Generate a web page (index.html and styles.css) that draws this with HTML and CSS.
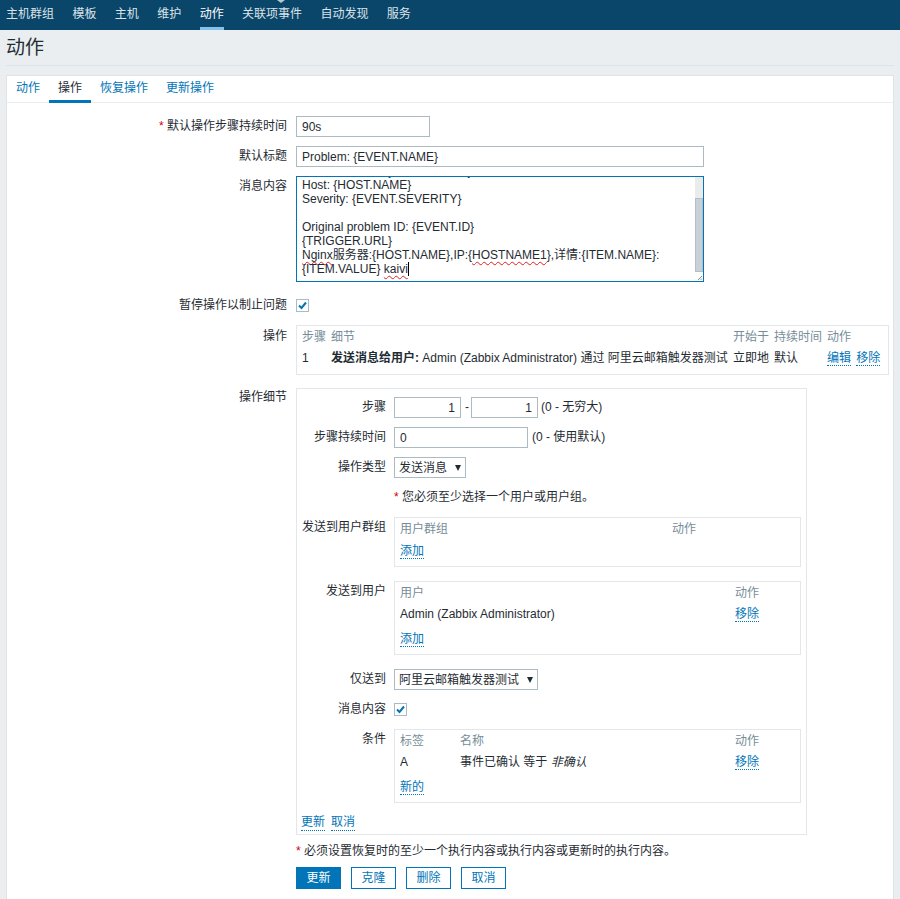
FILE: index.html
```html
<!DOCTYPE html>
<html lang="zh-CN">
<head>
<meta charset="utf-8">
<title>动作</title>
<link rel="stylesheet" href="styles.css">
</head>
<body>
<nav class="topnav">
  <span class="nav-item">主机群组</span>
  <span class="nav-item">模板</span>
  <span class="nav-item">主机</span>
  <span class="nav-item">维护</span>
  <span class="nav-item active">动作</span>
  <span class="nav-item">关联项事件</span>
  <span class="nav-item">自动发现</span>
  <span class="nav-item">服务</span>
  <span class="notch"></span>
</nav>
<main class="page">
  <header class="page-header"><h1 class="page-title">动作</h1></header>
  <section class="card">
    <ul class="tabs">
      <li class="tab">动作</li>
      <li class="tab active">操作</li>
      <li class="tab">恢复操作</li>
      <li class="tab">更新操作</li>
    </ul>
    <div class="form">
      <div class="row">
        <div class="lbl"><span class="req">*</span> 默认操作步骤持续时间</div>
        <div class="ctl"><input class="input w134" type="text" value="90s"></div>
      </div>
      <div class="row">
        <div class="lbl">默认标题</div>
        <div class="ctl"><input class="input w408" type="text" value="Problem: {EVENT.NAME}"></div>
      </div>
      <div class="row">
        <div class="lbl">消息内容</div>
        <div class="ctl">
          <div class="textarea">
            <div class="ta-view">
              <div class="ta-text">
                <div class="ta-line">Problem started at {EVENT.TIME} on {EVENT.DATE}</div>
                <div class="ta-line">Problem name: {EVENT.NAME}</div>
                <div class="ta-line">Host: {HOST.NAME}</div>
                <div class="ta-line">Severity: {EVENT.SEVERITY}</div>
                <div class="ta-line">&nbsp;</div>
                <div class="ta-line">Original problem ID: {EVENT.ID}</div>
                <div class="ta-line">{TRIGGER.URL}</div>
                <div class="ta-line"><span class="spell">Nginx</span>服务器:{HOST.NAME},IP:{<span class="spell">HOSTNAME1</span>},详情:{ITEM.NAME}:</div>
                <div class="ta-line">{ITEM.VALUE} <span class="spell">kaivi</span><span class="caret"></span></div>
              </div>
            </div>
            <div class="scrollbar">
              <div class="sb-track"></div>
              <div class="sb-thumb"></div>
              <div class="sb-corner">
                <svg width="8" height="8" viewBox="0 0 8 8"><path d="M7 3 L3 7 M7 5.5 L5.5 7" stroke="#8a8a8a" stroke-width="1" fill="none"/></svg>
              </div>
            </div>
          </div>
        </div>
      </div>
      <div class="row row-cb">
        <div class="lbl">暂停操作以制止问题</div>
        <div class="ctl"><span class="cb"><svg width="11" height="11" viewBox="0 0 11 11"><path d="M2 5.5 L4.5 8 L9 2.5" stroke="#0275b8" stroke-width="2" fill="none"/></svg></span></div>
      </div>
      <div class="row row-box">
        <div class="lbl lbl-box">操作</div>
        <div class="ctl">
          <div class="tbox tbox-ops">
            <div class="grid ops-grid th">
              <span>步骤</span><span>细节</span><span>开始于</span><span>持续时间</span><span>动作</span>
            </div>
            <div class="grid ops-grid tr">
              <span>1</span>
              <span class="nowrap"><b>发送消息给用户:</b> Admin (Zabbix Administrator) 通过 阿里云邮箱触发器测试</span>
              <span>立即地</span>
              <span>默认</span>
              <span class="nowrap"><a class="link">编辑</a> <a class="link">移除</a></span>
            </div>
          </div>
        </div>
      </div>
      <div class="row row-details">
        <div class="lbl lbl-details">操作细节</div>
        <div class="ctl">
          <div class="dbox">
            <div class="drow">
              <div class="dlbl">步骤</div>
              <div class="ctl">
                <input class="input w67 num" type="text" value="1"><span class="dash">-</span><input class="input w67 num" type="text" value="1"><span class="hint">(0 - 无穷大)</span>
              </div>
            </div>
            <div class="drow">
              <div class="dlbl">步骤持续时间</div>
              <div class="ctl"><input class="input w134" type="text" value="0"><span class="hint hint2">(0 - 使用默认)</span></div>
            </div>
            <div class="drow">
              <div class="dlbl">操作类型</div>
              <div class="ctl"><span class="sel">发送消息<span class="arrow"></span></span></div>
            </div>
            <div class="drow">
              <div class="dlbl"></div>
              <div class="ctl warn"><span class="req">*</span>&nbsp;您必须至少选择一个用户或用户组。</div>
            </div>
            <div class="drow drow-box">
              <div class="dlbl dlbl-box">发送到用户群组</div>
              <div class="ctl">
                <div class="tbox">
                  <div class="grid ug-grid th"><span>用户群组</span><span>动作</span></div>
                  <div class="grid tf"><span><a class="link">添加</a></span></div>
                </div>
              </div>
            </div>
            <div class="drow drow-box">
              <div class="dlbl dlbl-box">发送到用户</div>
              <div class="ctl">
                <div class="tbox">
                  <div class="grid u-grid th"><span>用户</span><span>动作</span></div>
                  <div class="grid u-grid tr"><span>Admin (Zabbix Administrator)</span><span><a class="link">移除</a></span></div>
                  <div class="grid tf"><span><a class="link">添加</a></span></div>
                </div>
              </div>
            </div>
            <div class="drow">
              <div class="dlbl">仅送到</div>
              <div class="ctl"><span class="sel">阿里云邮箱触发器测试<span class="arrow"></span></span></div>
            </div>
            <div class="drow">
              <div class="dlbl">消息内容</div>
              <div class="ctl"><span class="cb"><svg width="11" height="11" viewBox="0 0 11 11"><path d="M2 5.5 L4.5 8 L9 2.5" stroke="#0275b8" stroke-width="2" fill="none"/></svg></span></div>
            </div>
            <div class="drow drow-cond">
              <div class="dlbl dlbl-box">条件</div>
              <div class="ctl">
                <div class="tbox">
                  <div class="grid c-grid th"><span>标签</span><span>名称</span><span>动作</span></div>
                  <div class="grid c-grid tr"><span>A</span><span>事件已确认 等于 <em>非确认</em></span><span><a class="link">移除</a></span></div>
                  <div class="grid tf"><span><a class="link">新的</a></span></div>
                </div>
              </div>
            </div>
            <div class="dlinks"><a class="link">更新</a><a class="link">取消</a></div>
          </div>
        </div>
      </div>
      <div class="row row-note">
        <div class="lbl"></div>
        <div class="ctl note"><span class="req">*</span>&nbsp;必须设置恢复时的至少一个执行内容或执行内容或更新时的执行内容。</div>
      </div>
      <div class="row">
        <div class="lbl"></div>
        <div class="ctl buttons">
          <button class="btn primary" type="button">更新</button>
          <button class="btn" type="button">克隆</button>
          <button class="btn" type="button">删除</button>
          <button class="btn" type="button">取消</button>
        </div>
      </div>
    </div>
  </section>
</main>
</body>
</html>
```

FILE: styles.css
```css
* {
  box-sizing: border-box;
}

html, body {
  margin: 0;
  padding: 0;
}

body {
  background: #ebeef0;
  font-family: "Liberation Sans", Arial, "Noto Sans CJK SC", sans-serif;
  font-size: 12px;
  line-height: 14px;
  color: #1f2c33;
}

/* top navigation */
.topnav {
  position: relative;
  display: flex;
  gap: 18.4px;
  height: 30px;
  padding-left: 6px;
  background: #0a466a;
}

.nav-item {
  height: 30px;
  line-height: 28px;
  color: #dbe3e8;
  border-bottom: 3px solid transparent;
  white-space: nowrap;
}

.nav-item.active {
  color: #ffffff;
  border-bottom-color: #84c2ec;
}

.notch {
  position: absolute;
  left: 277px;
  top: 0;
  width: 0;
  height: 0;
  border-left: 4px solid transparent;
  border-right: 4px solid transparent;
  border-top: 3px solid #b8c8d3;
}

/* page */
.page {
  padding: 0 6px;
}

.page-header {
  height: 36px;
  border-bottom: 1px solid #dde3e7;
}

.page-title {
  margin: 0;
  font-size: 19px;
  font-weight: normal;
  line-height: 36px;
  color: #1f2c33;
}

.card {
  margin-top: 9px;
  background: #ffffff;
  border: 1px solid #dfe4e7;
  border-bottom: none;
  min-height: 830px;
}

/* tabs */
.tabs {
  display: flex;
  margin: 0;
  padding: 0;
  list-style: none;
  border-bottom: 1px solid #ebeef0;
  height: 27px;
}

.tab {
  padding: 0 9px;
  height: 27px;
  line-height: 24px;
  color: #0275b8;
  border-bottom: 3px solid transparent;
  margin-bottom: -1px;
  white-space: nowrap;
}

.tab.active {
  color: #1f2c33;
  border-bottom-color: #0275b8;
}

/* form rows */
.form {
  padding: 13px 4px 0 0;
}

.row {
  display: flex;
  column-gap: 9px;
  margin-bottom: 9px;
}

.row-cb {
  padding-top: 4px;
}

.row-box {
  margin-bottom: 13px;
}

.row-details {
  margin-bottom: 9px;
}

.lbl {
  flex: 0 0 280px;
  text-align: right;
  line-height: 21px;
  white-space: nowrap;
}

.lbl-box {
  line-height: 22px;
}

.lbl-details {
  line-height: 18px;
}

.ctl {
  flex: 1 1 auto;
  min-width: 0;
  display: flex;
  align-items: flex-start;
}

.req {
  color: #d40000;
}

/* inputs */
.input {
  height: 21px;
  margin: 0;
  padding: 0 5px;
  border: 1px solid #acbbc2;
  background: #ffffff;
  font: inherit;
  color: #1f2c33;
  outline: none;
}

.w134 { width: 134px; }
.w408 { width: 408px; }
.w67 { width: 67px; }

.num {
  text-align: right;
}

.dash {
  line-height: 21px;
  margin: 0 2px 0 4px;
}

.hint {
  line-height: 21px;
  margin-left: 3px;
  white-space: nowrap;
}

.hint2 {
  margin-left: 4px;
}

/* textarea */
.textarea {
  display: flex;
  width: 408px;
  height: 106px;
  border: 1px solid #0275b8;
  background: #ffffff;
}

.ta-view {
  flex: 1 1 auto;
  overflow: hidden;
  padding: 0 5px;
}

.ta-text {
  margin-top: -27px;
  white-space: nowrap;
}

.ta-line {
  height: 14px;
  line-height: 14px;
}

.spell {
  text-decoration: underline wavy #e02020;
  text-decoration-thickness: 1px;
  text-underline-offset: 2px;
}

.caret {
  display: inline-block;
  width: 1px;
  height: 14px;
  background: #000000;
  vertical-align: top;
}

.scrollbar {
  flex: 0 0 8px;
  display: flex;
  flex-direction: column;
}

.sb-track {
  height: 21px;
  background: #ebebeb;
}

.sb-thumb {
  flex: 1 1 auto;
  background: #c8d1d7;
  border: 1px solid #b3bec6;
}

.sb-corner {
  height: 9px;
  background: #ffffff;
  display: flex;
  align-items: flex-end;
  justify-content: flex-end;
}

/* checkbox */
.cb {
  display: inline-flex;
  align-items: center;
  justify-content: center;
  width: 13px;
  height: 13px;
  margin-top: 4px;
  border: 1px solid #acbbc2;
  background: #ffffff;
}

/* table boxes */
.tbox {
  width: 100%;
  border: 1px solid #e3e7ea;
  padding: 0 5px 4px;
}

.tbox-ops {
  padding-bottom: 2px;
}

.grid {
  display: grid;
}

.th {
  height: 22px;
  line-height: 22px;
  color: #768d99;
}

.tr {
  height: 24px;
  line-height: 21px;
}

.tf {
  height: 22px;
  line-height: 22px;
}

.ops-grid {
  grid-template-columns: 29px 1fr 41px 53px 56px;
}

.ug-grid {
  grid-template-columns: 272px 1fr;
}

.u-grid {
  grid-template-columns: 335px 1fr;
}

.c-grid {
  grid-template-columns: 60px 275px 1fr;
}

.nowrap {
  white-space: nowrap;
}

.link {
  color: #0275b8;
  border-bottom: 1px dotted #0275b8;
  text-decoration: none;
  cursor: pointer;
}

.link + .link {
  margin-left: 2px;
}

em {
  font-style: italic;
}

/* details box */
.dbox {
  width: 511px;
  border: 1px solid #e3e7ea;
  padding: 8px 5px 3px;
}

.drow {
  display: flex;
  column-gap: 8px;
  margin-bottom: 9px;
}

.drow-box {
  margin-bottom: 14px;
}

.drow-cond {
  margin-bottom: 12px;
}

.dlbl {
  flex: 0 0 84px;
  text-align: right;
  line-height: 21px;
  white-space: nowrap;
}

.dlbl-box {
  line-height: 20px;
}

.warn {
  line-height: 21px;
  white-space: nowrap;
}

.sel {
  display: inline-flex;
  align-items: center;
  height: 21px;
  padding: 0 4px;
  border: 1px solid #acbbc2;
  background: #ffffff;
  white-space: nowrap;
}

.arrow {
  width: 0;
  height: 0;
  margin-left: 8px;
  border-left: 3px solid transparent;
  border-right: 3px solid transparent;
  border-top: 6px solid #1f2c33;
}

.dlinks {
  display: flex;
  gap: 4px;
  margin-left: -1px;
  line-height: 14px;
  height: 16px;
}

/* bottom */
.note {
  line-height: 14px;
  white-space: nowrap;
}

.buttons {
  gap: 10px;
}

.btn {
  height: 22px;
  margin: 0;
  padding: 0 9.5px;
  border: 1px solid #0275b8;
  background: #ffffff;
  color: #0275b8;
  font: inherit;
  line-height: 20px;
  cursor: pointer;
}

.btn.primary {
  background: #0275b8;
  color: #ffffff;
}
```
